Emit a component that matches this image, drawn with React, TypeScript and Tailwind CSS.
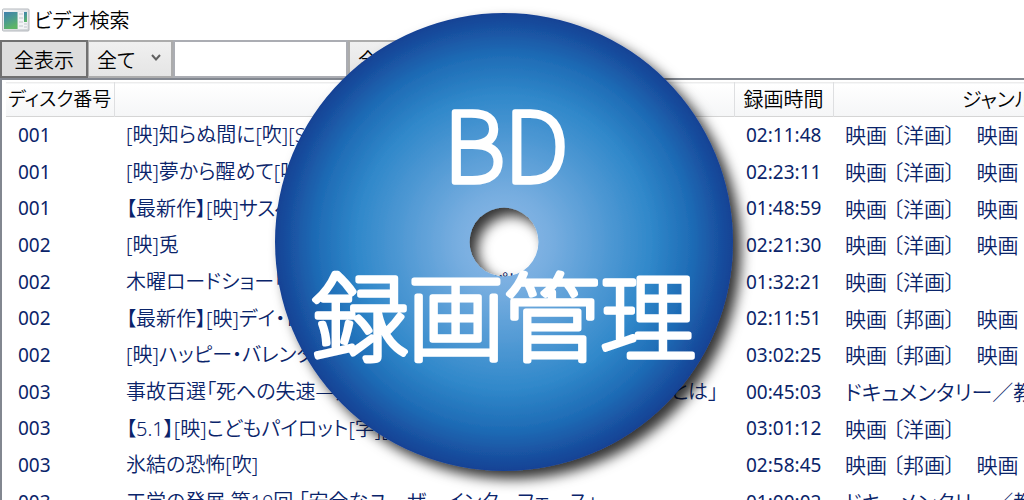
import React from "react";

type Row = { disc: string; title: string; time: string; genre: string };

const rows: Row[] = [
  { disc: "001", title: "[映]知らぬ間に[吹][SS]", time: "02:11:48", genre: "映画 〔洋画〕　映画" },
  { disc: "001", title: "[映]夢から醒めて[吹]", time: "02:23:11", genre: "映画 〔洋画〕　映画" },
  { disc: "001", title: "【最新作】[映]サスペンス", time: "01:48:59", genre: "映画 〔洋画〕　映画" },
  { disc: "002", title: "[映]兎", time: "02:21:30", genre: "映画 〔洋画〕　映画" },
  { disc: "002", title: "木曜ロードショー「サイレント・ナイト・イン・パリ」", time: "01:32:21", genre: "映画 〔洋画〕" },
  { disc: "002", title: "【最新作】[映]デイ・トリップ", time: "02:11:51", genre: "映画 〔邦画〕　映画" },
  { disc: "002", title: "[映]ハッピー・バレンタイン", time: "03:02:25", genre: "映画 〔邦画〕　映画" },
  { disc: "003", title: "事故百選「死への失速―見えない危険に挑んだ乗員、そして彼らとは」", time: "00:45:03", genre: "ドキュメンタリー／教養" },
  { disc: "003", title: "【5.1】[映]こどもパイロット[字][SS]", time: "03:01:12", genre: "映画 〔洋画〕" },
  { disc: "003", title: "氷結の恐怖[吹]", time: "02:58:45", genre: "映画 〔邦画〕　映画" },
  { disc: "003", title: "工学の発展 第10回 「安全なユーザーインターフェース」", time: "01:00:02", genre: "ドキュメンタリー／教養" },
];

function WindowIcon() {
  return (
    <svg width="28" height="24" viewBox="0 0 28 24" aria-hidden="true">
      <defs>
        <linearGradient id="pane" x1="0" y1="0" x2="0.4" y2="1">
          <stop offset="0" stopColor="#3f7fae" />
          <stop offset="0.5" stopColor="#4a9a92" />
          <stop offset="1" stopColor="#5cb566" />
        </linearGradient>
        <linearGradient id="frame" x1="0" y1="0" x2="1" y2="1">
          <stop offset="0" stopColor="#f4f6f8" />
          <stop offset="1" stopColor="#cfd2d6" />
        </linearGradient>
      </defs>
      <rect x="0.5" y="1" width="26.5" height="22" rx="1" fill="url(#frame)" stroke="#b4b8bd" />
      <rect x="2" y="4" width="13.5" height="17" fill="url(#pane)" />
      <rect x="16" y="4" width="9.5" height="17" fill="#f3f4f6" />
      <path d="M17 6h4M17 10h4M17 14h4M17 18h4M22 16h3M22 19h3" stroke="#dadde1" strokeWidth="2" />
      <rect x="22" y="4" width="3" height="10" fill="url(#pane)" />
    </svg>
  );
}

function DiscLogo() {
  return (
    <svg width="520" height="520" viewBox="-260 -260 520 520" role="img" aria-label="BD 録画管理">
      <defs>
        <radialGradient id="disc" gradientUnits="userSpaceOnUse" cx="0" cy="0" r="230">
          <stop offset="0" stopColor="#8cb9e8" />
          <stop offset="0.2" stopColor="#78aee0" />
          <stop offset="0.64" stopColor="#3088ca" />
          <stop offset="0.82" stopColor="#1e6bb5" />
          <stop offset="1" stopColor="#164194" />
        </radialGradient>
        <filter id="shadow" x="-20%" y="-20%" width="140%" height="140%">
          <feDropShadow dx="8" dy="8" stdDeviation="6.5" floodColor="#000" floodOpacity="0.8" />
        </filter>
      </defs>
      <path
        filter="url(#shadow)"
        fill="url(#disc)"
        fillRule="evenodd"
        d="M-229 0a229 229 0 1 0 458 0a229 229 0 1 0-458 0zM-34.5 0a34.5 34.5 0 1 0 69 0a34.5 34.5 0 1 0-69 0z"
      />
      <g
        fill="#fff"
        stroke="#fff"
        strokeWidth="5.5"
        strokeLinejoin="round"
        strokeLinecap="round"
        textAnchor="middle"
        className="font-['Noto_Sans_CJK_JP',sans-serif] text-[96px] font-thin"
      >
        <text x="2" y="-60">BD</text>
        <text x="0" y="111">録画管理</text>
      </g>
    </svg>
  );
}

export default function App() {
  return (
    <main className="relative h-screen overflow-hidden bg-white font-['Noto_Sans','Noto_Sans_CJK_JP',sans-serif] text-xl font-[350] text-black [font-feature-settings:'palt']">
      <header className="flex h-10 items-center gap-1 px-0.5">
        <WindowIcon />
        <h1 className="pt-0.5">ビデオ検索</h1>
      </header>

      <div className="flex h-[38px] w-max">
        <button type="button" className="w-[88px] border-2 border-[#707070] bg-[#dddddd] pt-1">
          全表示
        </button>
        <div className="relative w-[85px]">
          <select
            aria-label="検索項目"
            className="h-full w-full appearance-none border-2 border-l border-[#acacac] bg-linear-to-b from-[#f0f0f0] to-[#e5e5e5] pt-1 pl-2"
          >
            <option>全て</option>
          </select>
          <svg width="10" height="8" viewBox="0 0 10 8" className="pointer-events-none absolute top-3.5 right-3" aria-hidden="true">
            <path d="M1 1l4 4.5L9 1" fill="none" stroke="#606060" strokeWidth="2" />
          </svg>
        </div>
        <input aria-label="検索語" className="w-[175px] border-2 border-[#abadb3] bg-white px-2" />
        <select
          aria-label="ジャンル"
          className="w-[120px] appearance-none border-2 border-[#acacac] bg-linear-to-b from-[#f0f0f0] to-[#e5e5e5] pt-1 pl-2"
        >
          <option>全て</option>
        </select>
      </div>

      <section className="overflow-hidden border-t-2 border-l-2 border-[#828790] pt-0.5 pl-1">
        <table className="w-[1200px] table-fixed border-collapse whitespace-nowrap">
          <colgroup>
            <col className="w-[108px]" />
            <col className="w-[620px]" />
            <col className="w-[99px]" />
            <col />
          </colgroup>
          <thead>
            <tr className="h-[34px] border-t border-b border-t-[#ececec] border-b-[#d5d5d5] bg-linear-to-b from-white to-[#f5f6f7]">
              <th className="border-r border-[#dedfe1] p-0 text-[19px] font-[350]">ディスク番号</th>
              <th className="border-r border-[#dedfe1] p-0 font-[350]">タイトル</th>
              <th className="border-r border-[#dedfe1] p-0 font-[350]">録画時間</th>
              <th className="p-0 pr-11 font-[350]">ジャンル</th>
            </tr>
          </thead>
          <tbody className="text-[#0a246a]">
            {rows.map((row, i) => (
              <tr key={i} className="h-[37px] nth-[3n]:h-9">
                <td className="p-0 pl-3 text-[19px] font-normal">{row.disc}</td>
                <td className="overflow-hidden p-0 pl-3">{row.title}</td>
                <td className="p-0 pl-3 text-[19px] font-normal">{row.time}</td>
                <td className="p-0 pl-3 text-[21px] leading-7">{row.genre}</td>
              </tr>
            ))}
          </tbody>
        </table>
      </section>

      <div className="pointer-events-none absolute -top-[18px] left-[244px]">
        <DiscLogo />
      </div>
    </main>
  );
}
